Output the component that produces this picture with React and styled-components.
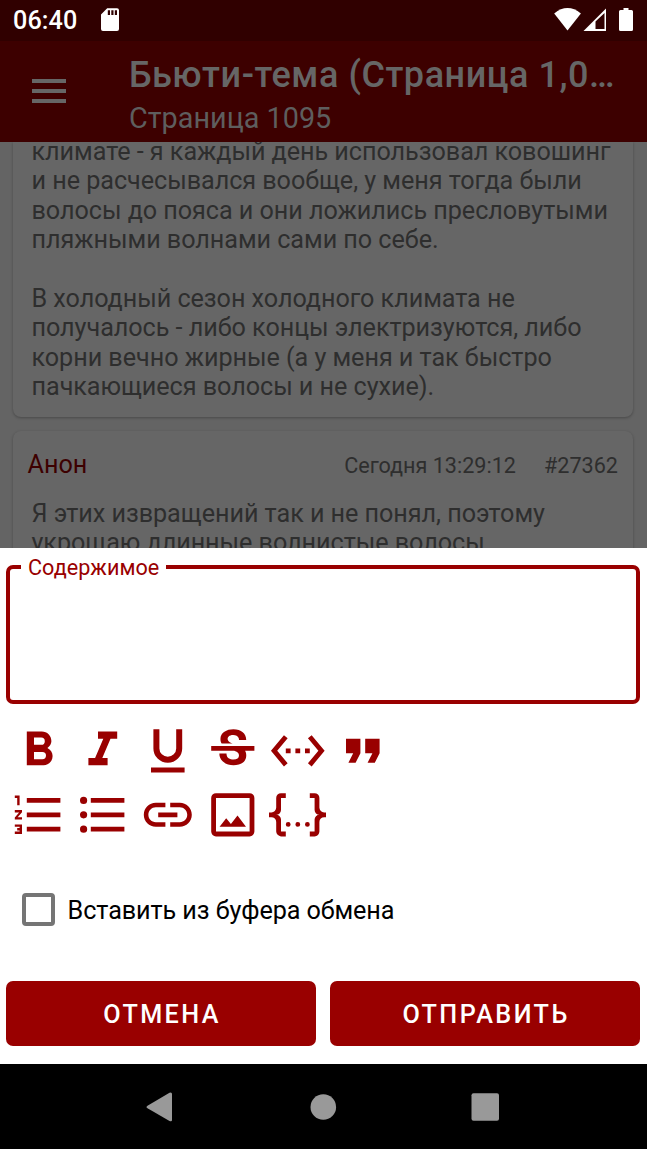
import React from "react";
import styled, { createGlobalStyle } from "styled-components";

const GlobalStyle = createGlobalStyle`
  * { box-sizing: border-box; }
  body { margin: 0; background: #000; }
`;

const Screen = styled.div`
  width: 647px;
  height: 1149px;
  display: flex;
  flex-direction: column;
  overflow: hidden;
  background: #646464;
  font-family: Roboto, "Liberation Sans", sans-serif;
  font-size: 25.2px;
`;

const StatusBar = styled.header`
  flex: none;
  height: 41px;
  display: flex;
  align-items: flex-start;
  padding: 5px 13px 0 13px;
  background: #300000;
  color: #fff;
`;

const Clock = styled.span`
  width: 87px;
  padding-top: 1px;
  font-weight: 500;
  line-height: 30px;
  letter-spacing: 0.1px;
`;

const StatusIcon = styled.svg`
  flex: none;
  display: block;
  margin-top: 3px;
  margin-left: ${(p) => p.$gap || 0}px;
  fill: #fff;
`;

const Spacer = styled.div`
  flex: 1;
`;

const Toolbar = styled.div`
  flex: none;
  height: 101px;
  display: flex;
  padding: 13px 20px 0 32px;
  background: #3d0000;
  color: #666;
`;

const MenuIcon = styled.div`
  flex: none;
  width: 97px;
  height: 24px;
  margin-top: 25px;
  display: flex;
  flex-direction: column;
  justify-content: space-between;
`;

const MenuBar = styled.span`
  width: 34px;
  height: 4px;
  background: #666;
`;

const Titles = styled.div`
  min-width: 0;
`;

const Title = styled.div`
  font-size: 36px;
  font-weight: 500;
  line-height: 42px;
  letter-spacing: 0.54px;
  white-space: nowrap;
`;

const Subtitle = styled.div`
  margin-top: 5px;
  font-size: 28.8px;
  line-height: 34px;
  color: #5e5e5e;
`;

const Feed = styled.main`
  flex: none;
  height: 405.5px;
  overflow: hidden;
  padding: 0 14px 0 12.5px;
`;

const Card = styled.article`
  background: #666;
  border-radius: ${(p) => (p.$continued ? "0 0 8px 8px" : "8px")};
  box-shadow: 0 1px 3px rgba(0, 0, 0, 0.28);
  padding: ${(p) => (p.$continued ? "0 19px 15.4px" : "0 15px 20px")};
  height: ${(p) => p.$h}px;
  margin-bottom: 14px;
  display: flex;
  flex-direction: column;
  justify-content: ${(p) => (p.$continued ? "flex-end" : "flex-start")};
`;

const Body = styled.p`
  margin: 0;
  margin-left: ${(p) => p.$indent || 0}px;
  line-height: 29.4px;
  min-height: 29.4px;
  letter-spacing: -0.05px;
  white-space: nowrap;
  color: #2e2e2e;
`;

const PostHead = styled.div`
  display: flex;
  align-items: baseline;
  height: 49px;
  margin: 19px 0 0;
  line-height: 30px;
`;

const Author = styled.span`
  flex: 1;
  color: #3d0000;
`;

const Meta = styled.span`
  font-size: 21.6px;
  margin-left: 28px;
  color: #2e2e2e;
`;

const Sheet = styled.section`
  flex: none;
  height: 516px;
  background: #fff;
  padding: 17px 7px 0 6px;
`;

const Field = styled.div`
  position: relative;
  height: 139px;
  border: 4px solid #900;
  border-radius: 7px;
`;

const FieldLabel = styled.span`
  position: absolute;
  left: 11px;
  top: -14px;
  padding: 0 7px;
  background: #fff;
  color: #900;
  font-size: 21.6px;
  line-height: 26px;
  letter-spacing: 0.05px;
`;

const FormatBar = styled.div`
  display: grid;
  grid-template-columns: repeat(6, 64.8px);
  grid-auto-rows: 64.8px;
  margin: 18px 0 0 3.6px;
`;

const FormatIcon = styled.svg`
  display: block;
  width: 57.6px;
  height: 57.6px;
  fill: #900;
`;

const CheckRow = styled.label`
  display: flex;
  align-items: center;
  height: 34px;
  margin: 41px 0 0 16px;
  color: #000;
  letter-spacing: -0.08px;
`;

const CheckBox = styled.span`
  width: 33px;
  height: 33px;
  margin-right: 12.6px;
  border: 4px solid #757575;
  border-radius: 4px;
`;

const CheckText = styled.span`
  padding-top: 2px;
`;

const Actions = styled.div`
  display: grid;
  grid-template-columns: 1fr 1fr;
  gap: 14px;
  margin-top: 55px;
`;

const Button = styled.button`
  height: 64.7px;
  border: 0;
  border-radius: 7px;
  padding: 2px 0 0 2px;
  background: #900;
  color: #fff;
  font: 500 25.2px Roboto, "Liberation Sans", sans-serif;
  letter-spacing: 2.4px;
`;

const NavBar = styled.nav`
  flex: none;
  height: 86px;
  display: flex;
  justify-content: center;
  align-items: center;
  background: #000;
`;

const NavIcon = styled.svg`
  display: block;
  width: 162px;
  height: 30px;
  fill: #999;
`;

const ICONS = [
  "M13.5,15.5H10V12.5H13.5A1.5,1.5 0 0,1 15,14A1.5,1.5 0 0,1 13.5,15.5M10,6.5H13A1.5,1.5 0 0,1 14.5,8A1.5,1.5 0 0,1 13,9.5H10M15.6,10.79C16.57,10.11 17.25,9 17.25,8C17.25,5.74 15.5,4 13.25,4H7V18H14.04C16.14,18 17.75,16.3 17.75,14.21C17.75,12.69 16.89,11.39 15.6,10.79Z",
  "M10,4V7H12.21L8.79,15H6V18H14V15H11.79L15.21,7H18V4H10Z",
  "M5,21H19V19H5V21M12,17A6,6 0 0,0 18,11V3H15.5V11A3.5,3.5 0 0,1 12,14.5A3.5,3.5 0 0,1 8.5,11V3H6V11A6,6 0 0,0 12,17Z",
  "M6.85 7.08C6.85 4.37 9.45 3 12.24 3c1.64 0 3 .49 3.9 1.28.77.65 1.46 1.73 1.46 3.24h-3.01c0-.31-.05-.59-.15-.85-.29-.86-1.2-1.28-2.25-1.28-1.86 0-2.34 1.02-2.34 1.7 0 .48.25.88.74 1.21.38.25.77.48 1.41.7H7.39c-.21-.34-.54-.89-.54-1.92zM21 12v-2H3v2h9.62c1.15.45 1.96.75 1.96 1.97 0 1-.81 1.67-2.28 1.67-1.54 0-2.93-.54-2.93-2.51H6.4c0 .55.08 1.13.24 1.58.81 2.29 3.29 3.3 5.67 3.3 2.27 0 5.3-.89 5.3-4.05 0-.3-.01-1.16-.48-1.94H21V12z",
  "M7.77 6.76L6.23 5.48.82 12l5.41 6.52 1.54-1.28L3.42 12l4.35-5.24zM7 13h2v-2H7v2zm10-2h-2v2h2v-2zm-6 2h2v-2h-2v2zm6.77-7.52l-1.54 1.28L20.58 12l-4.35 5.24 1.54 1.28L23.18 12l-5.41-6.52z",
  "M14,17H17L19,13V7H13V13H16M6,17H9L11,13V7H5V13H8L6,17Z",
  "M2 17h2v.5H3v1h1v.5H2v1h3v-4H2v1zm1-9h1V4H2v1h1v3zm-1 3h1.8L2 13.1v.9h3v-1H3.2L5 10.9V10H2v1zm5-6v2h14V5H7zm0 14h14v-2H7v2zm0-6h14v-2H7v2z",
  "M7,5H21V7H7V5M7,13V11H21V13H7M4,4.5A1.5,1.5 0 0,1 5.5,6A1.5,1.5 0 0,1 4,7.5A1.5,1.5 0 0,1 2.5,6A1.5,1.5 0 0,1 4,4.5M4,10.5A1.5,1.5 0 0,1 5.5,12A1.5,1.5 0 0,1 4,13.5A1.5,1.5 0 0,1 2.5,12A1.5,1.5 0 0,1 4,10.5M7,19V17H21V19H7M4,16.5A1.5,1.5 0 0,1 5.5,18A1.5,1.5 0 0,1 4,19.5A1.5,1.5 0 0,1 2.5,18A1.5,1.5 0 0,1 4,16.5Z",
  "M3.9 12c0-1.71 1.39-3.1 3.1-3.1h4V7H7c-2.76 0-5 2.24-5 5s2.24 5 5 5h4v-1.9H7c-1.71 0-3.1-1.39-3.1-3.1zM8 13h8v-2H8v2zm9-6h-4v1.9h4c1.71 0 3.1 1.39 3.1 3.1s-1.39 3.1-3.1 3.1h-4V17h4c2.76 0 5-2.24 5-5s-2.24-5-5-5z",
  "M19,19H5V5H19M19,3H5A2,2 0 0,0 3,5V19A2,2 0 0,0 5,21H19A2,2 0 0,0 21,19V5A2,2 0 0,0 19,3M13.96,12.29L11.21,15.83L9.25,13.47L6.5,17H17.5L13.96,12.29Z",
  "M5,3H7V5H5V10A2,2 0 0,1 3,12A2,2 0 0,1 5,14V19H7V21H5C3.93,20.73 3,20.1 3,19V15A2,2 0 0,0 1,13H0V11H1A2,2 0 0,0 3,9V5A2,2 0 0,1 5,3M19,3A2,2 0 0,1 21,5V9A2,2 0 0,0 23,11H24V13H23A2,2 0 0,0 21,15V19A2,2 0 0,1 19,21H17V19H19V14A2,2 0 0,1 21,12A2,2 0 0,1 19,10V5H17V3H19M12,15A1,1 0 0,1 13,16A1,1 0 0,1 12,17A1,1 0 0,1 11,16A1,1 0 0,1 12,15M8,15A1,1 0 0,1 9,16A1,1 0 0,1 8,17A1,1 0 0,1 7,16A1,1 0 0,1 8,15M16,15A1,1 0 0,1 17,16A1,1 0 0,1 16,17A1,1 0 0,1 15,16A1,1 0 0,1 16,15Z",
];

const FIRST_POST = [
  "климате - я каждый день использовал ковошинг",
  "и не расчесывался вообще, у меня тогда были",
  "волосы до пояса и они ложились пресловутыми",
  "пляжными волнами сами по себе.",
  "",
  "В холодный сезон холодного климата не",
  "получалось - либо концы электризуются, либо",
  "корни вечно жирные (а у меня и так быстро",
  "пачкающиеся волосы и не сухие).",
];

const SECOND_POST = [
  "Я этих извращений так и не понял, поэтому",
  "укрощаю длинные волнистые волосы",
];

export default function App() {
  return (
    <Screen>
      <GlobalStyle />
      <StatusBar>
        <Clock>06:40</Clock>
        <StatusIcon width="20" height="24" viewBox="0 0 20 24">
          <path
            fillRule="evenodd"
            d="M7.200.3H17Q19 .3 19 2.300V21Q19 23 17 23H3Q1 23 1 21V6.500ZM7.800 2.300V7H10V2.300ZM11.300 2.300V7H13.500V2.300ZM14.800 2.300V7H17V2.300Z"
          />
        </StatusIcon>
        <Spacer />
        <StatusIcon width="28" height="24" viewBox="0 0 28 24">
          <path d="M.2 5.500Q13.500-5.400 26.900 5.500L13.500 22.500Z" />
        </StatusIcon>
        <StatusIcon $gap={1} width="24" height="24" viewBox="0 0 24 24">
          <path fillRule="evenodd" d="M.5 23 23 .5V23ZM12.500 13.500V21H21.500V5Z" />
        </StatusIcon>
        <StatusIcon $gap={12} width="15" height="24" viewBox="0 0 15 24">
          <path d="M4.500 0H9.500V2H12.500Q14 2 14 3.500V21.500Q14 23 12.500 23H1.500Q0 23 0 21.500V3.500Q0 2 1.500 2H4.500Z" />
        </StatusIcon>
      </StatusBar>
      <Toolbar>
        <MenuIcon>
          <MenuBar />
          <MenuBar />
          <MenuBar />
        </MenuIcon>
        <Titles>
          <Title>Бьюти-тема (Страница 1,0…</Title>
          <Subtitle>Страница 1095</Subtitle>
        </Titles>
      </Toolbar>
      <Feed>
        <Card $continued $h={275}>
          {FIRST_POST.map((line, i) => (
            <Body key={i}>{line}</Body>
          ))}
        </Card>
        <Card $h={180}>
          <PostHead>
            <Author>Анон</Author>
            <Meta>Сегодня 13:29:12</Meta>
            <Meta>#27362</Meta>
          </PostHead>
          {SECOND_POST.map((line) => (
            <Body key={line} $indent={4}>
              {line}
            </Body>
          ))}
        </Card>
      </Feed>
      <Sheet>
        <Field>
          <FieldLabel>Содержимое</FieldLabel>
        </Field>
        <FormatBar>
          {ICONS.map((d) => (
            <FormatIcon key={d} viewBox="0 0 24 24">
              <path d={d} />
            </FormatIcon>
          ))}
        </FormatBar>
        <CheckRow>
          <CheckBox />
          <CheckText>Вставить из буфера обмена</CheckText>
        </CheckRow>
        <Actions>
          <Button>ОТМЕНА</Button>
          <Button>ОТПРАВИТЬ</Button>
        </Actions>
      </Sheet>
      <NavBar>
        <NavIcon viewBox="0 0 162 30">
          <path d="M66.500 13.700 88.500 .7Q91-.2 91 2V28Q91 30 88.500 29L66.500 16.300Q64.500 15 66.500 13.700Z" />
        </NavIcon>
        <NavIcon viewBox="0 0 162 30">
          <circle cx="80.300" cy="15" r="12.800" />
        </NavIcon>
        <NavIcon viewBox="0 0 162 30">
          <rect x="66.500" y="1.300" width="27.500" height="27.500" rx="2" />
        </NavIcon>
      </NavBar>
    </Screen>
  );
}
